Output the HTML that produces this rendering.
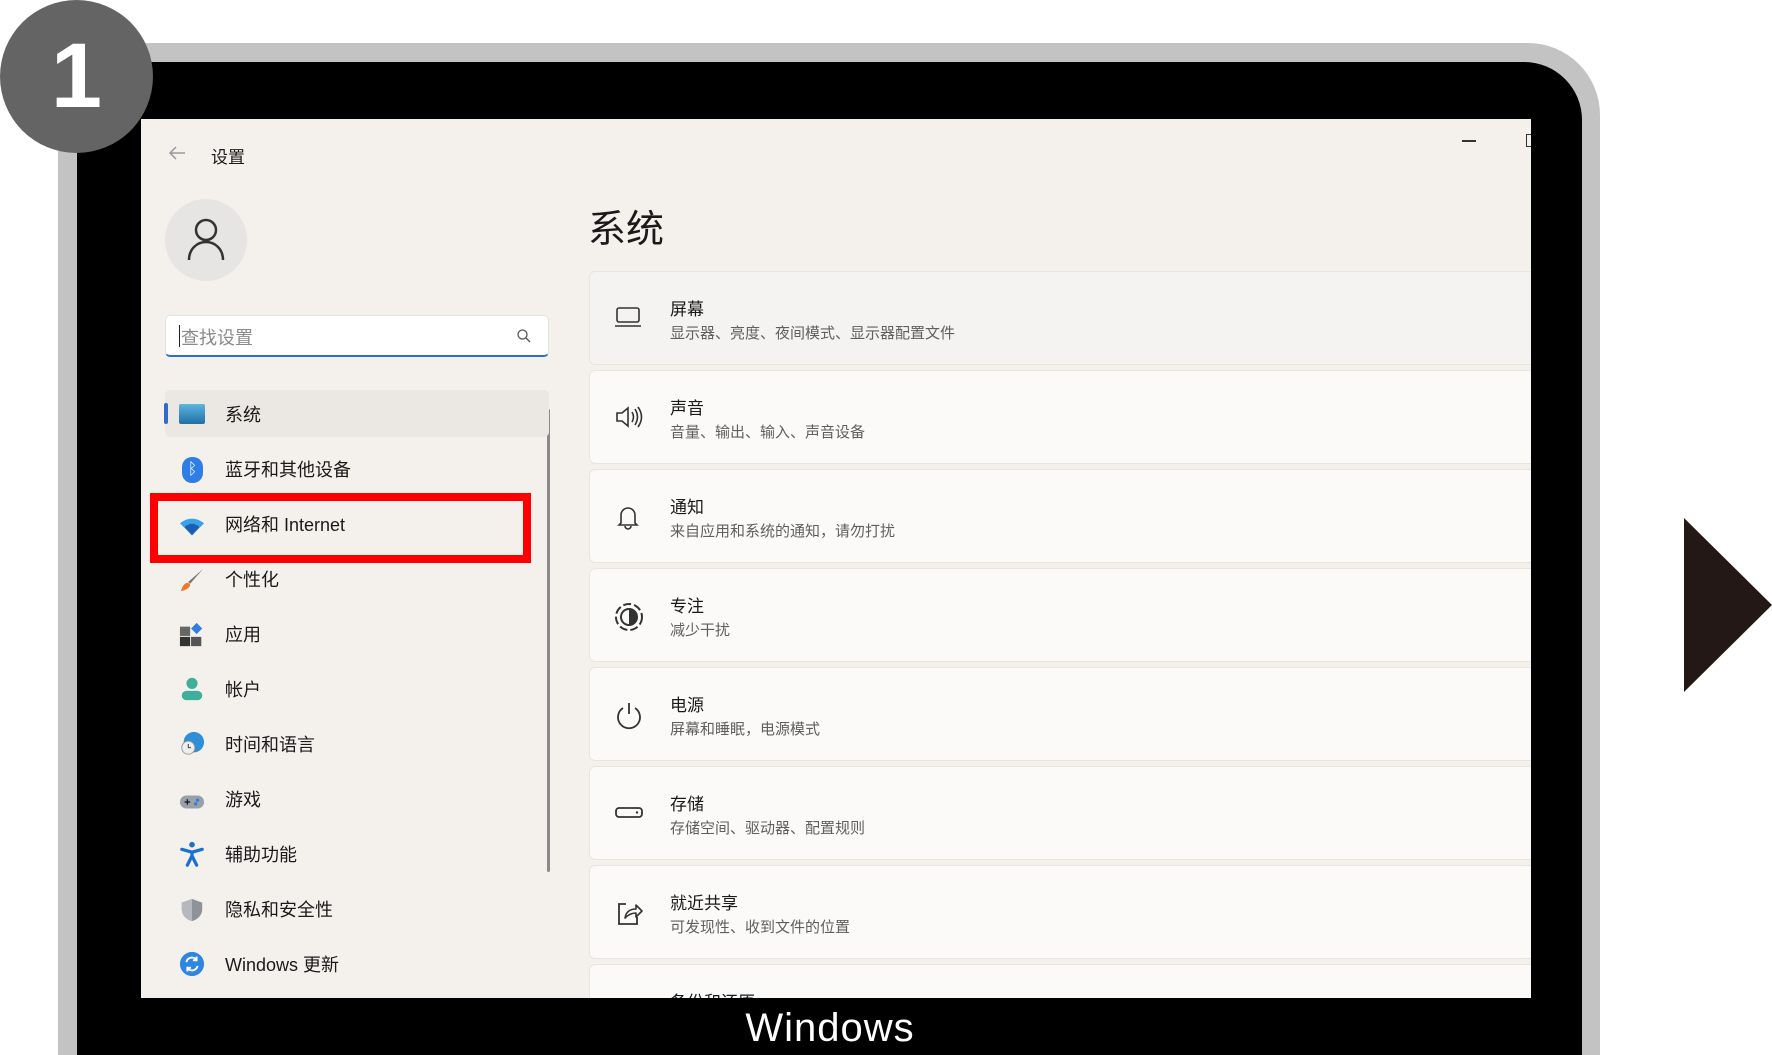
<!DOCTYPE html>
<html><head><meta charset="utf-8">
<style>
*{margin:0;padding:0;box-sizing:border-box}
html,body{width:1772px;height:1055px;overflow:hidden;background:#fff;font-family:"Liberation Sans","Noto Sans CJK SC",sans-serif}
#wrap{position:relative;width:1772px;height:1055px;overflow:hidden}
.abs{position:absolute}
#gray{left:58px;top:43px;width:1542px;height:1012px;background:#c3c3c3;border-radius:72px 72px 0 0}
#black{left:77px;top:62px;width:1505px;height:993px;background:#000;border-radius:58px 58px 0 0}
#screen{left:141px;top:119px;width:1390px;height:879px;background:#f4f1ed;overflow:hidden}
#num{left:0;top:0;width:153px;height:153px;border-radius:50%;background:#646464;color:#fff;font-size:92px;font-weight:bold;text-align:center;line-height:153px}
#tri{left:1684px;top:518px;width:0;height:0;border-top:87px solid transparent;border-bottom:87px solid transparent;border-left:88px solid #231815}
#win{left:680px;top:1004px;width:300px;height:48px;text-align:center;color:#fff;font-size:40px;line-height:48px;letter-spacing:1px}
.nav{position:absolute;left:84px;font-size:18px;color:#1a1a1a;height:30px;line-height:30px}
.ic{position:absolute;width:26px;height:26px}
.card{position:absolute;left:448px;width:960px;height:94px;background:#fbfaf9;border:1px solid #e8e5e1;border-radius:6px}
.card .t{position:absolute;left:80px;top:23px;font-size:17px;color:#1a1a1a}
.card .s{position:absolute;left:80px;top:50px;font-size:15px;color:#5f5f5f}
.card svg{position:absolute;left:24px;top:33px}
</style></head><body><div id="wrap">
<div id="gray" class="abs"></div>
<div id="black" class="abs"></div>
<div id="screen" class="abs">
  <svg class="abs" style="left:26px;top:26px" width="20" height="16" viewBox="0 0 20 16"><path d="M18 8H3M9 2L3 8l6 6" stroke="#9a9a9a" stroke-width="1.5" fill="none"/></svg>
  <div class="abs" style="left:70px;top:24px;font-size:17px;color:#1a1a1a">设置</div>
  <div class="abs" style="left:1321px;top:21px;width:14px;height:1.5px;background:#333"></div>
  <div class="abs" style="left:1385px;top:15px;width:8px;height:13px;border:1.5px solid #333"></div>
  <div class="abs" style="left:24px;top:80px;width:82px;height:82px;border-radius:50%;background:#e6e5e4"></div>
  <svg class="abs" style="left:44px;top:98px" width="42" height="44" viewBox="0 0 42 44"><circle cx="21" cy="13" r="10" stroke="#333" stroke-width="2.5" fill="none"/><path d="M4 43c0-11 8-18 17-18s17 7 17 18" stroke="#333" stroke-width="2.5" fill="none"/></svg>
  <div class="abs" style="left:24px;top:196px;width:384px;height:42px;background:#fff;border:1px solid #e2e2e2;border-bottom:2px solid #2d6ccd;border-radius:5px"></div>
  <div class="abs" style="left:38px;top:206px;width:1px;height:22px;background:#222"></div>
  <div class="abs" style="left:40px;top:205px;font-size:18px;color:#8a8a8a">查找设置</div>
  <svg class="abs" style="left:375px;top:209px" width="16" height="16" viewBox="0 0 16 16"><circle cx="6.5" cy="6.5" r="4.5" stroke="#555" stroke-width="1.3" fill="none"/><path d="M10 10l4 4" stroke="#555" stroke-width="1.3"/></svg>
  <div class="abs" style="left:406px;top:290px;width:3px;height:463px;background:#8a8a8a;border-radius:2px"></div>
  <div class="abs" style="left:24px;top:271px;width:384px;height:47px;background:#ebe7e2;border-radius:5px"></div>
  <div class="abs" style="left:23px;top:284px;width:4px;height:21px;background:#2d6ccd;border-radius:2px"></div>
  <div style="position:absolute;left:0;top:281px;width:420px">
    <div class="nav" style="top:0"><div class="ic" style="left:-46px;top:4px;width:26px;height:20px;background:linear-gradient(#5cb6dc,#1f6fa8);border-radius:2px"></div>系统</div>
    <div class="nav" style="top:55px"><div class="ic" style="left:-43px;top:2px;width:21px;height:26px;border-radius:10px;background:#2f7ee6;color:#fff;font-size:16px;line-height:26px;text-align:center">ᛒ</div>蓝牙和其他设备</div>
    <div class="nav" style="top:110px"><svg class="ic" style="left:-46px;top:4px" width="28" height="22" viewBox="0 0 28 22"><path d="M1 7Q14-3 27 7L14 20Z" fill="#3aa0e8"/><path d="M6 11Q14 4 22 11L14 20Z" fill="#1a5fb4"/></svg>网络和 Internet</div>
    <div class="nav" style="top:165px"><svg class="ic" style="left:-46px;top:2px" width="28" height="28" viewBox="0 0 28 28"><path d="M26 2L12 18l-2-2z" fill="#777"/><path d="M10 17c-4 0-6 3-8 9 6-1 10-4 10-7z" fill="#e87a2a"/></svg>个性化</div>
    <div class="nav" style="top:220px"><svg class="ic" style="left:-46px;top:2px" width="28" height="26" viewBox="0 0 28 26"><rect x="1" y="4" width="11" height="10" fill="#666"/><rect x="1" y="15" width="11" height="10" fill="#333"/><rect x="13" y="15" width="11" height="10" fill="#555"/><path d="M19 0l6 6-6 6-6-6z" fill="#2f7ee6"/></svg>应用</div>
    <div class="nav" style="top:275px"><svg class="ic" style="left:-46px;top:1px" width="28" height="28" viewBox="0 0 28 28"><circle cx="14" cy="8" r="6" fill="#3fae9a"/><rect x="3" y="16" width="22" height="10" rx="5" fill="#3fae9a"/></svg>帐户</div>
    <div class="nav" style="top:330px"><svg class="ic" style="left:-46px;top:1px" width="28" height="28" viewBox="0 0 28 28"><circle cx="16" cy="12" r="11" fill="#2e8ed6"/><circle cx="10" cy="18" r="7" fill="#eee" stroke="#999"/><path d="M10 14v4h3" stroke="#333" fill="none"/></svg>时间和语言</div>
    <div class="nav" style="top:385px"><svg class="ic" style="left:-46px;top:4px" width="28" height="20" viewBox="0 0 28 20"><rect x="1" y="3" width="26" height="14" rx="7" fill="#9aa0a8"/><path d="M6 10h6M9 7v6" stroke="#222" stroke-width="1.5"/><circle cx="20" cy="8" r="1.8" fill="#2f7ee6"/><circle cx="18" cy="12" r="1.8" fill="#2f7ee6"/></svg>游戏</div>
    <div class="nav" style="top:440px"><svg class="ic" style="left:-46px;top:1px" width="28" height="28" viewBox="0 0 28 28"><circle cx="14" cy="4" r="3" fill="#1a6fd0"/><path d="M3 9l11 3 11-3M14 12v4l-5 10M14 16l5 10" stroke="#1a6fd0" stroke-width="3.5" fill="none" stroke-linecap="round"/></svg>辅助功能</div>
    <div class="nav" style="top:495px"><svg class="ic" style="left:-46px;top:2px" width="28" height="28" viewBox="0 0 28 28"><path d="M14 2l11 4v7c0 7-5 11-11 13C8 24 3 20 3 13V6z" fill="#8e9399"/><path d="M14 2v24C8 24 3 20 3 13V6z" fill="#b5b9be"/></svg>隐私和安全性</div>
    <div class="nav" style="top:550px"><svg class="ic" style="left:-46px;top:1px" width="28" height="28" viewBox="0 0 28 28"><circle cx="14" cy="14" r="13" fill="#2f86e0"/><path d="M8 12a6 6 0 0 1 11-2M20 16a6 6 0 0 1-11 2" stroke="#fff" stroke-width="2" fill="none"/><path d="M19 6v4h-4M9 22v-4h4" stroke="#fff" stroke-width="2" fill="none"/></svg>Windows 更新</div>
  </div>
  <div class="abs" style="left:9px;top:374px;width:381px;height:70px;border:8px solid #f00"></div>
  <div class="abs" style="left:447px;top:79px;font-size:38px;color:#1a1a1a">系统</div>
  <div class="card" style="top:152px;background:#f5f3f1"><svg width="28" height="24" viewBox="0 0 28 24"><rect x="3" y="3" width="22" height="14" rx="2" stroke="#333" stroke-width="1.6" fill="none"/><path d="M1 21h26" stroke="#333" stroke-width="1.6"/></svg><div class="t">屏幕</div><div class="s">显示器、亮度、夜间模式、显示器配置文件</div></div>
  <div class="card" style="top:251px"><svg width="30" height="26" viewBox="0 0 30 26"><path d="M3 9h5l6-5v18l-6-5H3z" stroke="#333" stroke-width="1.6" fill="none"/><path d="M18 8q3 5 0 10M21 5q5 8 0 16M24 3q7 10 0 20" stroke="#333" stroke-width="1.6" fill="none"/></svg><div class="t">声音</div><div class="s">音量、输出、输入、声音设备</div></div>
  <div class="card" style="top:350px"><svg width="28" height="28" viewBox="0 0 28 28"><path d="M7 20V12a7 7 0 0 1 14 0v8l2 2H5z" stroke="#333" stroke-width="1.6" fill="none"/><path d="M11 23a3 3 0 0 0 6 0" stroke="#333" stroke-width="1.6" fill="none"/></svg><div class="t">通知</div><div class="s">来自应用和系统的通知，请勿打扰</div></div>
  <div class="card" style="top:449px"><svg width="30" height="30" viewBox="0 0 30 30"><circle cx="15" cy="15" r="13" stroke="#333" stroke-width="2" stroke-dasharray="8 3" fill="none"/><circle cx="15" cy="15" r="8" stroke="#333" stroke-width="2" fill="none"/><path d="M15 7a8 8 0 0 1 0 16z" fill="#333"/></svg><div class="t">专注</div><div class="s">减少干扰</div></div>
  <div class="card" style="top:548px"><svg width="30" height="30" viewBox="0 0 30 30"><path d="M9 7a11 11 0 1 0 12 0" stroke="#333" stroke-width="1.8" fill="none"/><path d="M15 2v11" stroke="#333" stroke-width="1.8"/></svg><div class="t">电源</div><div class="s">屏幕和睡眠，电源模式</div></div>
  <div class="card" style="top:647px"><svg width="30" height="24" viewBox="0 0 30 24"><rect x="2" y="8" width="26" height="9" rx="3" stroke="#333" stroke-width="1.8" fill="none"/><circle cx="23" cy="12.5" r="1.2" fill="#333"/></svg><div class="t">存储</div><div class="s">存储空间、驱动器、配置规则</div></div>
  <div class="card" style="top:746px"><svg width="30" height="30" viewBox="0 0 30 30"><path d="M12 5H5v20h18v-7" stroke="#333" stroke-width="1.8" fill="none"/><path d="M11 19c1-6 5-9 11-9V6l6 6-6 6v-4c-5 0-8 2-11 5z" stroke="#333" stroke-width="1.6" fill="none" stroke-linejoin="round"/></svg><div class="t">就近共享</div><div class="s">可发现性、收到文件的位置</div></div>
  <div class="card" style="top:845px;height:34px;border-bottom:none;border-radius:6px 6px 0 0"><div class="t">备份和还原</div></div>
</div>
<div id="num" class="abs">1</div>
<div id="tri" class="abs"></div>
<div id="win" class="abs">Windows</div>
</div></body></html>
